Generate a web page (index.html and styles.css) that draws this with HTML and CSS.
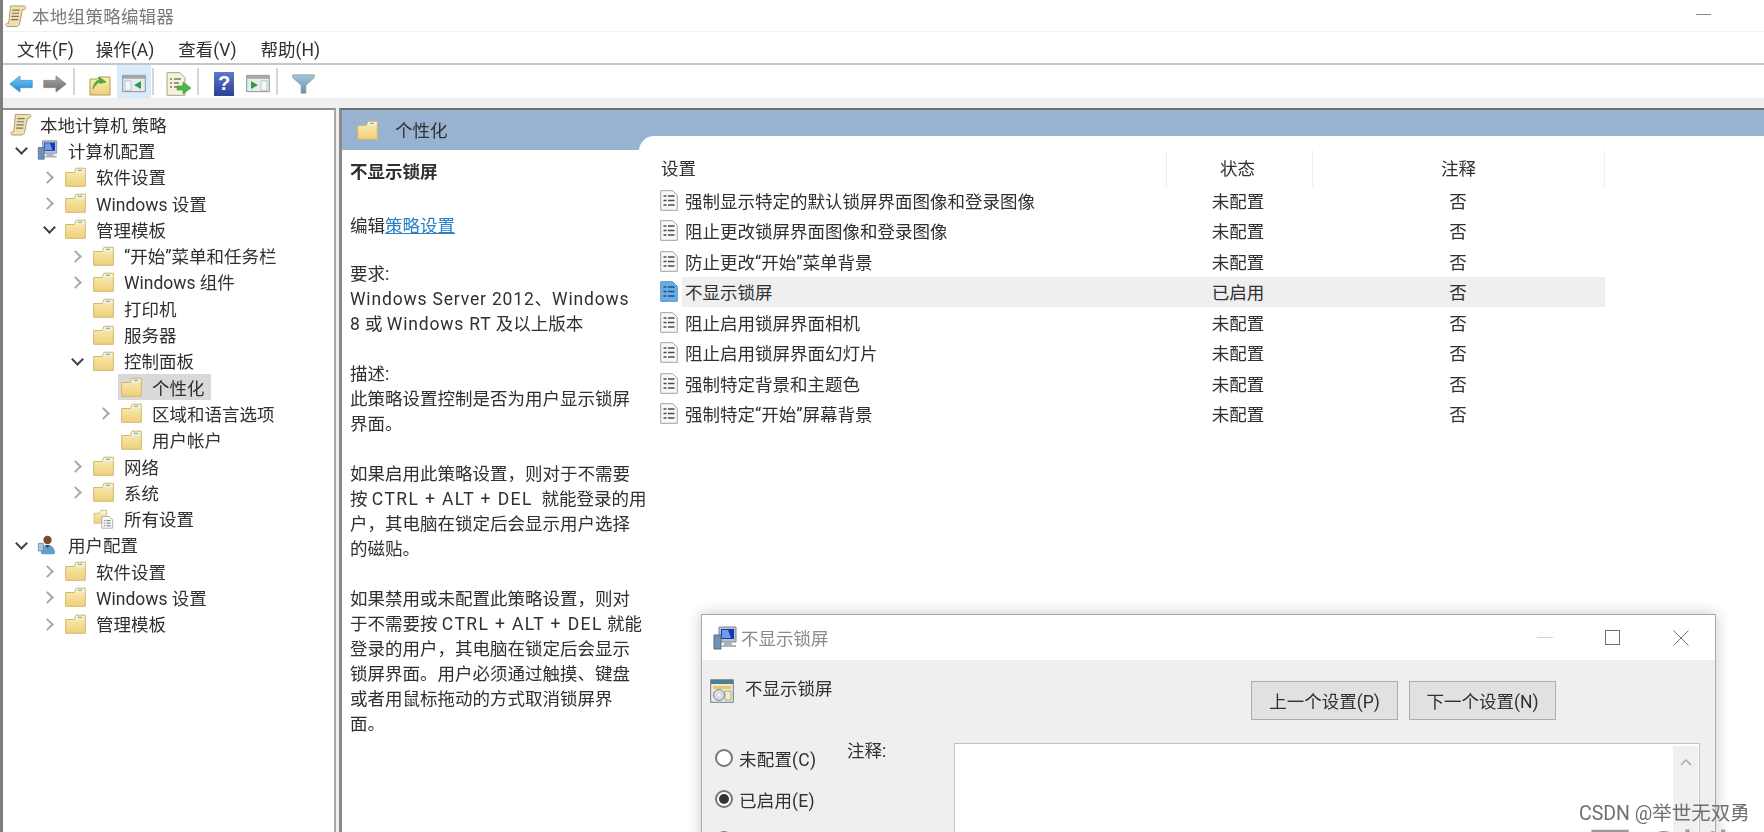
FILE: index.html
```html
<!DOCTYPE html>
<html lang="zh-CN">
<head>
<meta charset="utf-8">
<title>本地组策略编辑器</title>
<link rel="stylesheet" href="styles.css">
</head>
<body>
<svg class="defs" xmlns="http://www.w3.org/2000/svg">
  <defs>
    <linearGradient id="gFolder" x1="0" y1="0" x2="0" y2="1"><stop offset="0" stop-color="#fbeeb4"/><stop offset="1" stop-color="#edd07c"/></linearGradient>
    <linearGradient id="gBlue" x1="0" y1="0" x2="0" y2="1"><stop offset="0" stop-color="#7fcdf2"/><stop offset="1" stop-color="#1c86d2"/></linearGradient>
    <linearGradient id="gGray" x1="0" y1="0" x2="0" y2="1"><stop offset="0" stop-color="#a8a8a8"/><stop offset="1" stop-color="#6c6c6c"/></linearGradient>
    <linearGradient id="gFunnel" x1="0" y1="0" x2="0" y2="1"><stop offset="0" stop-color="#a9c6d8"/><stop offset="1" stop-color="#6f8ea3"/></linearGradient>
    <symbol id="folder" viewBox="0 0 21 20"><path d="M.7 5.500h8.600L11 1.200h9.300v18.100H.7z" fill="url(#gFolder)" stroke="#d2b76c"/><path d="M11.600 2h7.800v3.400h-9.200z" fill="#eef3e6"/><path d="M13 3.400h4" stroke="#8fb6a4" stroke-width="1.400"/></symbol>
    <symbol id="scroll" viewBox="0 0 24 25"><path d="M6 1.500h15c2 0 2.500 3.500 0 4h-2L16 21c-.5 2-2 3-4 3H3c-2.500 0-3-3.500-.5-3.500H4z" fill="#efe0b0" stroke="#ad9665"/><path d="M8 6h8M7.500 9.500h8M7 13h8M6.500 16.500h8" stroke="#7d7659" stroke-width="1.300"/></symbol>
    <symbol id="computer" viewBox="0 0 24 24"><path d="M6 1h17v15H6z" fill="#b9c2cc" stroke="#7f8a96"/><path d="M8 3h13v10H8z" fill="#1c35b8"/><path d="M9 4h6l3 8H9z" fill="#6f9de8"/><path d="M11 16h8v3h4v2H9v-2h2z" fill="#aab3bc"/><path d="M1 9h7v14H1z" fill="#6d93b6" stroke="#51708d"/></symbol>
    <symbol id="user" viewBox="0 0 24 24"><circle cx="12" cy="6" r="5" fill="#7a4a2c"/><path d="M4 21c0-7 4-9 8-9s8 2 9 9c0 2-2 2-3 2H7c-2 0-3-1-3-2z" fill="#5d9fd0"/><path d="M1 10h6v9H1z" fill="#a8c6dc" stroke="#6489a5"/><path d="M9 12l3 4 3-4z" fill="#36485a"/></symbol>
    <symbol id="allset" viewBox="0 0 24 24"><path d="M.7 5h6.600l1.500-3.500h7v15.500H.7z" fill="url(#gFolder)" stroke="#d2b76c"/><path d="M9 2.500h6v2.500H8z" fill="#eef3e6"/><path d="M10 9h9l4 4v10H10z" fill="#f7f7f7" stroke="#a3a3a3"/><path d="M12.500 14h1.500M15.500 14h5M12.500 17h1.500M15.500 17h5M12.500 20h1.500M15.500 20h5" stroke="#777" stroke-width="1.200"/></symbol>
    <symbol id="doc" viewBox="0 0 18 21"><path d="M.7.7h12l4.600 4.600v15H.7z" fill="#f8f8f8" stroke="#a2a2a2"/><path d="M3.500 6h3M8 6h6.500M3.500 10.500h3M8 10.500h6.500M3.500 15h3M8 15h6.500" stroke="#4a4a4a" stroke-width="1.500"/></symbol>
    <symbol id="docOn" viewBox="0 0 18 21"><path d="M.7.7h12l4.600 4.600v15H.7z" fill="#69ade4" stroke="#5794c8"/><path d="M3.500 6h3M8 6h6.500M3.500 10.500h3M8 10.500h6.500M3.500 15h3M8 15h6.500" stroke="#24507a" stroke-width="1.500"/></symbol>
    <symbol id="dlgIcon" viewBox="0 0 24 24"><path d="M.7.700h22.600v22.600H.7z" fill="#e8ebe8" stroke="#6f7d85"/><path d="M1 1h22v4H1z" fill="#4f7f8f"/><path d="M3 7h18v3H3z" fill="#eec65a"/><circle cx="9" cy="16" r="5.500" fill="#d6dbe0" stroke="#7c868e"/><circle cx="9" cy="16" r="1.500" fill="#fff"/><path d="M15 12h6v9h-6z" fill="#f2eccb" stroke="#9a9a80" stroke-width=".8"/></symbol>
  </defs>
</svg>

<div class="app">
  <header class="titlebar">
    <svg class="ico-title"><use href="#scroll"/></svg>
    <span class="title-text">本地组策略编辑器</span>
    <span class="min-btn"></span>
  </header>

  <nav class="menubar">
    <span>文件(F)</span><span>操作(A)</span><span>查看(V)</span><span>帮助(H)</span>
  </nav>

  <div class="toolbar">
    <span class="tb"><svg width="24" height="18" viewBox="0 0 24 20" preserveAspectRatio="none"><path d="M.8 10L11 1v5h12.200v8H11v5z" fill="url(#gBlue)" stroke="#2b8fd2" stroke-width=".8"/></svg></span>
    <span class="tb"><svg width="24" height="18" viewBox="0 0 24 20" preserveAspectRatio="none"><path d="M23.200 10L13 1v5H.8v8H13v5z" fill="url(#gGray)" stroke="#808080" stroke-width=".8"/></svg></span>
    <span class="sep"></span>
    <span class="tb"><svg width="22" height="24" viewBox="0 0 22 24"><path d="M1 7h7l2-2h11v18H1z" fill="url(#gFolder)" stroke="#b69a58"/><path d="M4 17c1-6 3-8 6-9V5l7 5-6 1.500V10c-3 1-5 3-7 7z" fill="#4fae3a" stroke="#3c8a2c" stroke-width=".6"/></svg></span>
    <span class="tb on"><svg width="24" height="19" viewBox="0 0 24 24" preserveAspectRatio="none"><path d="M.7 1.700h22.600v20.600H.7z" fill="#e4ecef" stroke="#85898c"/><path d="M1 2h22v4H1z" fill="#a4a8ab"/><path d="M3 8.500h6v12H3z" fill="#f4f7f8" stroke="#b0b4b6" stroke-width=".8"/><path d="M19 9v10l-7-5z" fill="#2f9c3c"/></svg></span>
    <span class="sep"></span>
    <span class="tb"><svg width="26" height="24" viewBox="0 0 26 24"><path d="M1 .7h13l5 5v17.600H1z" fill="#f6f2d6" stroke="#a8a28c"/><path d="M4 7h2M8 7h7M4 11h2M8 11h5M4 15h2M8 15h4" stroke="#777" stroke-width="1.300"/><path d="M11 14h6v-4l8 6-8 6v-4h-6z" fill="#4cb848" stroke="#3a963a" stroke-width=".6"/></svg></span>
    <span class="sep"></span>
    <span class="tb"><span class="help">?</span></span>
    <span class="tb"><svg width="24" height="19" viewBox="0 0 24 24" preserveAspectRatio="none"><path d="M.7 1.700h22.600v20.600H.7z" fill="#e4ecef" stroke="#85898c"/><path d="M1 2h22v4H1z" fill="#a4a8ab"/><path d="M15 8.500h6v12h-6z" fill="#f4f7f8" stroke="#b0b4b6" stroke-width=".8"/><path d="M5 9v10l7-5z" fill="#2f9c3c"/></svg></span>
    <span class="sep"></span>
    <span class="tb"><svg width="23" height="20" viewBox="0 0 24 23" preserveAspectRatio="none"><path d="M.7 1h22.600v3L14.500 13v9h-5v-9L.7 4z" fill="url(#gFunnel)" stroke="#7f9bae" stroke-width=".8"/></svg></span>
  </div>

  <main class="workspace">
    <aside class="tree">
      <div class="row l0"><svg class="i22"><use href="#scroll"/></svg><span class="lbl0">本地计算机 策略</span></div>
      <div class="row l1"><span class="chev down"></span><span class="node"><svg class="i21"><use href="#computer"/></svg><span>计算机配置</span></span></div>
      <div class="row l2"><span class="chev right"></span><span class="node"><svg class="i21"><use href="#folder"/></svg><span>软件设置</span></span></div>
      <div class="row l2"><span class="chev right"></span><span class="node"><svg class="i21"><use href="#folder"/></svg><span>Windows 设置</span></span></div>
      <div class="row l2"><span class="chev down"></span><span class="node"><svg class="i21"><use href="#folder"/></svg><span>管理模板</span></span></div>
      <div class="row l3"><span class="chev right"></span><span class="node"><svg class="i21"><use href="#folder"/></svg><span>“开始”菜单和任务栏</span></span></div>
      <div class="row l3"><span class="chev right"></span><span class="node"><svg class="i21"><use href="#folder"/></svg><span>Windows 组件</span></span></div>
      <div class="row l3"><span class="chev"></span><span class="node"><svg class="i21"><use href="#folder"/></svg><span>打印机</span></span></div>
      <div class="row l3"><span class="chev"></span><span class="node"><svg class="i21"><use href="#folder"/></svg><span>服务器</span></span></div>
      <div class="row l3"><span class="chev down"></span><span class="node"><svg class="i21"><use href="#folder"/></svg><span>控制面板</span></span></div>
      <div class="row l4"><span class="chev"></span><span class="node sel"><svg class="i21"><use href="#folder"/></svg><span>个性化</span></span></div>
      <div class="row l4"><span class="chev right"></span><span class="node"><svg class="i21"><use href="#folder"/></svg><span>区域和语言选项</span></span></div>
      <div class="row l4"><span class="chev"></span><span class="node"><svg class="i21"><use href="#folder"/></svg><span>用户帐户</span></span></div>
      <div class="row l3"><span class="chev right"></span><span class="node"><svg class="i21"><use href="#folder"/></svg><span>网络</span></span></div>
      <div class="row l3"><span class="chev right"></span><span class="node"><svg class="i21"><use href="#folder"/></svg><span>系统</span></span></div>
      <div class="row l3"><span class="chev"></span><span class="node"><svg class="i21"><use href="#allset"/></svg><span>所有设置</span></span></div>
      <div class="row l1"><span class="chev down"></span><span class="node"><svg class="i21"><use href="#user"/></svg><span>用户配置</span></span></div>
      <div class="row l2"><span class="chev right"></span><span class="node"><svg class="i21"><use href="#folder"/></svg><span>软件设置</span></span></div>
      <div class="row l2"><span class="chev right"></span><span class="node"><svg class="i21"><use href="#folder"/></svg><span>Windows 设置</span></span></div>
      <div class="row l2"><span class="chev right"></span><span class="node"><svg class="i21"><use href="#folder"/></svg><span>管理模板</span></span></div>
    </aside>

    <section class="pane">
      <div class="pane-head"><svg class="i21"><use href="#folder"/></svg><span>个性化</span></div>
      <div class="pane-body">
        <article class="desc">
          <h1>不显示锁屏</h1>
          <p class="edit">编辑<a href="#">策略设置</a></p>
          <p>要求:<br><span class="lat">Windows Server 2012</span>、<span class="lat">Windows</span><br><span class="lat">8</span> 或 <span class="lat">Windows RT</span> 及以上版本</p>
          <p>描述:<br>此策略设置控制是否为用户显示锁屏<br>界面。</p>
          <p>如果启用此策略设置，则对于不需要<br>按 <span class="key">CTRL + ALT + DEL</span> &nbsp;就能登录的用<br>户，其电脑在锁定后会显示用户选择<br>的磁贴。</p>
          <p>如果禁用或未配置此策略设置，则对<br>于不需要按 <span class="key">CTRL + ALT + DEL</span> 就能<br>登录的用户，其电脑在锁定后会显示<br>锁屏界面。用户必须通过触摸、键盘<br>或者用鼠标拖动的方式取消锁屏界<br>面。</p>
        </article>
        <div class="list">
          <div class="list-head">
            <span class="c-name">设置</span><span class="c-state">状态</span><span class="c-note">注释</span>
          </div>
          <div class="item"><svg class="i-doc"><use href="#doc"/></svg><div class="cells"><span class="c-text">强制显示特定的默认锁屏界面图像和登录图像</span><span class="c-st">未配置</span><span class="c-nt">否</span></div></div>
          <div class="item"><svg class="i-doc"><use href="#doc"/></svg><div class="cells"><span class="c-text">阻止更改锁屏界面图像和登录图像</span><span class="c-st">未配置</span><span class="c-nt">否</span></div></div>
          <div class="item"><svg class="i-doc"><use href="#doc"/></svg><div class="cells"><span class="c-text">防止更改“开始”菜单背景</span><span class="c-st">未配置</span><span class="c-nt">否</span></div></div>
          <div class="item"><svg class="i-doc"><use href="#docOn"/></svg><div class="cells hl"><span class="c-text">不显示锁屏</span><span class="c-st">已启用</span><span class="c-nt">否</span></div></div>
          <div class="item"><svg class="i-doc"><use href="#doc"/></svg><div class="cells"><span class="c-text">阻止启用锁屏界面相机</span><span class="c-st">未配置</span><span class="c-nt">否</span></div></div>
          <div class="item"><svg class="i-doc"><use href="#doc"/></svg><div class="cells"><span class="c-text">阻止启用锁屏界面幻灯片</span><span class="c-st">未配置</span><span class="c-nt">否</span></div></div>
          <div class="item"><svg class="i-doc"><use href="#doc"/></svg><div class="cells"><span class="c-text">强制特定背景和主题色</span><span class="c-st">未配置</span><span class="c-nt">否</span></div></div>
          <div class="item"><svg class="i-doc"><use href="#doc"/></svg><div class="cells"><span class="c-text">强制特定“开始”屏幕背景</span><span class="c-st">未配置</span><span class="c-nt">否</span></div></div>
        </div>
      </div>
    </section>
  </main>

  <div class="dialog">
    <div class="dlg-title">
      <svg class="i24"><use href="#computer"/></svg>
      <span class="dlg-name">不显示锁屏</span>
      <span class="ctl-min"></span>
      <span class="ctl-max"></span>
      <svg class="ctl-x" viewBox="0 0 16 16"><path d="M.5.5l15 15M15.500.5l-15 15" stroke="#777" fill="none"/></svg>
    </div>
    <div class="dlg-top">
      <svg class="i24 dlg-ico"><use href="#dlgIcon"/></svg>
      <span class="dlg-sub">不显示锁屏</span>
      <button class="btn" type="button">上一个设置(P)</button>
      <button class="btn" type="button">下一个设置(N)</button>
    </div>
    <div class="dlg-main">
      <div class="radios">
        <label class="radio"><span class="dot"></span>未配置(C)</label>
        <label class="radio"><span class="dot checked"></span>已启用(E)</label>
        <label class="radio"><span class="dot"></span>已禁用(D)</label>
      </div>
      <span class="note-lbl">注释:</span>
      <div class="note-box"><div class="scroll"><svg width="12" height="8" viewBox="0 0 12 8"><path d="M1 7l5-5 5 5" fill="none" stroke="#a8a8a8" stroke-width="1.500"/></svg></div></div>
    </div>
  </div>

  <div class="mark-back">丌 @bil</div>
  <div class="mark">CSDN @举世无双勇</div>
</div>
</body>
</html>
```
FILE: styles.css
```css
* { box-sizing: border-box; }
html, body { margin: 0; padding: 0; width: 1764px; height: 832px; overflow: hidden; background: #fff; }
body { font-family: Roboto, "Noto Sans CJK SC", sans-serif; font-size: 17.5px; color: #303030; }
.defs { display: block; width: 0; height: 0; }
svg { display: block; flex: none; }

.app { position: relative; width: 1764px; height: 832px; overflow: hidden; display: flex; flex-direction: column; border-left: 3px solid #7d7d7d; filter: blur(.5px); }

.titlebar { height: 32px; display: flex; align-items: center; padding-left: 2px; border-bottom: 1px solid #f1f1f1; flex: none; }
.ico-title { width: 22px; height: 24px; }
.title-text { margin-left: 5px; color: #7a7a7a; letter-spacing: .3px; }
.min-btn { width: 15px; height: 1px; background: #888; margin-left: auto; margin-right: 53px; margin-top: -3px; }

.menubar { height: 33px; display: flex; align-items: center; gap: 24px; padding-left: 14px; border-bottom: 2px solid #c4c8cc; flex: none; padding-top: 1px; }
.menubar span:first-child { margin-right: -2px; }

.toolbar { height: 34px; flex: none; display: flex; align-items: stretch; padding-left: 1px; border-bottom: 1px solid #ececec; }
.tb { width: 34px; display: flex; align-items: center; justify-content: center; padding-top: 4px; }
.tb.on { background: #d9eafa; }
.sep { width: 2px; margin: 3px 8px 3px 1px; background: #d6d6d6; }
.help { width: 20px; height: 24px; display: flex; align-items: center; justify-content: center; background: linear-gradient(#5d79c9, #2a3f96); color: #fff; font-family: "Liberation Sans", sans-serif; font-weight: 700; font-size: 20px; }

.workspace { flex: 1; display: flex; background: #efefef; padding-top: 9px; min-height: 0; }

.tree { width: 333px; background: #fff; border-top: 2px solid #909090; border-right: 2px solid #a8a8a8; padding-top: 1px; flex: none; }
.row { height: 26.300px; display: flex; align-items: center; white-space: nowrap; }
.l0 { padding-left: 7px; }
.l1 { padding-left: 9px; }
.l2 { padding-left: 37px; }
.l3 { padding-left: 65px; }
.l4 { padding-left: 93px; }
.i22 { width: 22px; height: 23px; }
.lbl0 { margin-left: 8px; }
.i21 { width: 21px; height: 20px; }
.chev { width: 16px; height: 16px; margin-right: 6px; flex: none; }
.chev.right::before { content: ""; display: block; width: 7px; height: 7px; margin: 4px 0 0 3px; border-top: 2px solid #a9a9a9; border-right: 2px solid #a9a9a9; transform: rotate(45deg); }
.chev.down::before { content: ""; display: block; width: 7px; height: 7px; margin: 2px 0 0 4.500px; border-bottom: 2px solid #3f3f3f; border-right: 2px solid #3f3f3f; transform: rotate(45deg); }
.node { display: flex; align-items: center; gap: 10px; height: 26px; padding: 0 6px 0 3px; }
.sel { background: #d9d9d9; }

.pane { flex: 1; margin-left: 3px; background: #fff; border-top: 2px solid #6f6f6f; border-left: 3px solid #8a8a8a; display: flex; flex-direction: column; min-width: 0; }
.pane-head { height: 40px; background: #98b3d2; display: flex; align-items: flex-start; gap: 17px; padding: 8px 0 0 15px; flex: none; line-height: 26px; }
.pane-head svg { margin-top: 2px; }
.pane-body { flex: 1; display: flex; min-height: 0; }

.desc { position: relative; z-index: 1; width: 297px; flex: none; padding: 10px 0 0 8px; line-height: 25px; white-space: nowrap; }
.desc h1 { margin: 0 0 29px; font-size: 17.500px; font-weight: 700; line-height: 25px; }
.desc p { margin: 0 0 25px; }
.desc p.edit { margin-bottom: 23px; }
.desc a { color: #2a7fc8; text-decoration: underline; }
.lat { letter-spacing: .83px; }
.key { letter-spacing: 1.400px; }

.list { flex: 1; margin-top: -14px; background: #fff; border-top-left-radius: 15px; padding-top: 14px; }
.list-head { height: 35px; display: flex; align-items: flex-start; }
.list-head span { height: 37px; line-height: 39px; text-align: center; border-right: 1px solid #eee; }
.list-head .c-name { width: 528px; padding-left: 22px; text-align: left; }
.c-state { width: 146px; padding-right: 4px; }
.c-note { width: 292px; }
.item { height: 30.500px; display: flex; align-items: center; }
.i-doc { width: 18px; height: 21px; margin: 0 4px 0 21px; }
.cells { height: 100%; width: 923px; display: flex; align-items: center; }
.hl { background: #efefef; }
.c-text { width: 483px; padding-left: 3px; }
.c-st { width: 146px; text-align: center; }
.c-nt { width: 294px; text-align: center; }

.dialog { position: absolute; left: 698px; top: 614px; width: 1015px; height: 240px; background: #efefef; border: 1px solid #a9a9a9; box-shadow: 0 0 14px rgba(0,0,0,.22); display: flex; flex-direction: column; z-index: 2; }
.dlg-title { height: 45px; flex: none; background: #fff; display: flex; align-items: center; padding: 0 26px 0 11px; }
.i24 { width: 24px; height: 24px; }
.dlg-name { margin-left: 4px; color: #8a8a8a; }
.ctl-min { width: 16px; height: 1px; background: #d0d0d0; margin-left: auto; }
.ctl-max { width: 15px; height: 15px; border: 1px solid #707070; margin-left: 52px; }
.ctl-x { width: 16px; height: 16px; margin-left: 53px; }

.dlg-top { height: 77px; flex: none; display: flex; align-items: flex-start; padding: 21px 159px 0 8px; gap: 11px; }
.dlg-ico { margin-top: -2px; }
.dlg-sub { line-height: 20px; margin-top: -2px; margin-right: auto; }
.btn { width: 147px; height: 39px; margin: 0; background: #e1e1e1; border: 1px solid #adadad; font: inherit; color: #303030; padding: 0; }

.dlg-main { flex: 1; display: flex; min-height: 0; }
.radios { width: 145px; flex: none; padding-left: 13px; }
.radio { height: 41px; display: flex; align-items: center; gap: 6px; letter-spacing: .2px; }
.radio:first-child { margin-top: .5px; }
.dot { width: 18px; height: 18px; border-radius: 50%; border: 2px solid #777; background: #fff; display: flex; align-items: center; justify-content: center; flex: none; }
.checked::after { content: ""; width: 10px; height: 10px; border-radius: 50%; background: #333; }
.note-lbl { width: 107px; flex: none; line-height: 26px; margin-top: 1px; height: 26px; }
.note-box { width: 746px; height: 120px; margin-top: 6px; background: #fff; border: 1.500px solid #c2c2c2; display: flex; justify-content: flex-end; padding: 2px 1px 0 0; flex: none; }
.scroll { width: 25px; background: #f0f0f0; display: flex; justify-content: center; padding-top: 12px; }

.mark { position: absolute; left: 1576px; top: 802px; font-size: 19.500px; line-height: 24px; color: #6f6f6f; white-space: nowrap; z-index: 3; }
.mark-back { position: absolute; left: 1585px; top: 822px; font-size: 44px; line-height: 52px; color: #9a9a9a; white-space: nowrap; z-index: 3; }
```
